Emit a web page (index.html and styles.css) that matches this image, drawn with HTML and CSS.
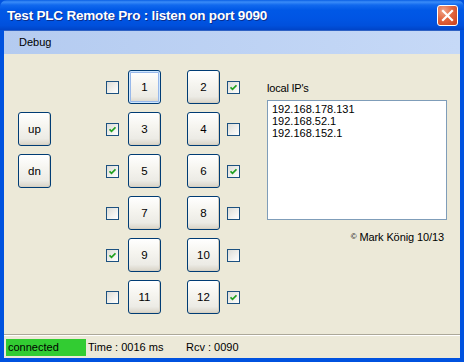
FILE: index.html
```html
<!DOCTYPE html>
<html>
<head>
<meta charset="utf-8">
<link rel="stylesheet" href="styles.css">
</head>
<body>
<div class="window">
  <div class="titlebar">
    <span class="title">Test PLC Remote Pro : listen on port 9090</span>
    <span class="close">
      <svg width="13" height="13" viewBox="0 0 13 13"><path d="M2 2 L11 11 M11 2 L2 11" stroke="#fff" stroke-width="2.2" stroke-linecap="square" fill="none"/></svg>
    </span>
  </div>
  <div class="menubar"><span class="menuitem">Debug</span></div>
  <div class="client">
    <div class="main">
      <button class="btn r1 c3 focus">1</button>
      <button class="btn r1 c5">2</button>
      <button class="btn r2 c3">3</button>
      <button class="btn r2 c5">4</button>
      <button class="btn r3 c3">5</button>
      <button class="btn r3 c5">6</button>
      <button class="btn r4 c3">7</button>
      <button class="btn r4 c5">8</button>
      <button class="btn r5 c3">9</button>
      <button class="btn r5 c5">10</button>
      <button class="btn r6 c3">11</button>
      <button class="btn r6 c5">12</button>
      <button class="btn r2 c1">up</button>
      <button class="btn r3 c1">dn</button>

      <span class="cb r1 c2"></span>
      <span class="cb r1 c6 on"><svg viewBox="0 0 7 7"><path d="M0.5 3.3 L2.5 5.3 L6.5 1.3" stroke="#21a121" stroke-width="1.8" fill="none"/></svg></span>
      <span class="cb r2 c2 on"><svg viewBox="0 0 7 7"><path d="M0.5 3.3 L2.5 5.3 L6.5 1.3" stroke="#21a121" stroke-width="1.8" fill="none"/></svg></span>
      <span class="cb r2 c6"></span>
      <span class="cb r3 c2 on"><svg viewBox="0 0 7 7"><path d="M0.5 3.3 L2.5 5.3 L6.5 1.3" stroke="#21a121" stroke-width="1.8" fill="none"/></svg></span>
      <span class="cb r3 c6 on"><svg viewBox="0 0 7 7"><path d="M0.5 3.3 L2.5 5.3 L6.5 1.3" stroke="#21a121" stroke-width="1.8" fill="none"/></svg></span>
      <span class="cb r4 c2"></span>
      <span class="cb r4 c6"></span>
      <span class="cb r5 c2 on"><svg viewBox="0 0 7 7"><path d="M0.5 3.3 L2.5 5.3 L6.5 1.3" stroke="#21a121" stroke-width="1.8" fill="none"/></svg></span>
      <span class="cb r5 c6"></span>
      <span class="cb r6 c2"></span>
      <span class="cb r6 c6 on"><svg viewBox="0 0 7 7"><path d="M0.5 3.3 L2.5 5.3 L6.5 1.3" stroke="#21a121" stroke-width="1.8" fill="none"/></svg></span>

      <div class="panel">
        <div class="label">local IP's</div>
        <div class="listbox">
          <div>192.168.178.131</div>
          <div>192.168.52.1</div>
          <div>192.168.152.1</div>
        </div>
        <div class="copy"><span class="copysym">©</span> Mark König 10/13</div>
      </div>
    </div>
    <div class="statusbar">
      <span class="status conn">connected</span>
      <span class="status time">Time : 0016 ms</span>
      <span class="status rcv">Rcv : 0090</span>
    </div>
  </div>
</div>
</body>
</html>
```
FILE: styles.css
```css
html, body {
  margin: 0;
  padding: 0;
  width: 464px;
  height: 362px;
  overflow: hidden;
  background: #ece9d8;
}
.window {
  width: 464px;
  height: 362px;
  box-sizing: border-box;
  display: flex;
  flex-direction: column;
  background: #0052df;
  font-family: "Liberation Sans", Arial, sans-serif;
  font-size: 11px;
  color: #000;
}
.titlebar {
  height: 30px;
  flex: none;
  display: flex;
  align-items: center;
  justify-content: space-between;
  padding: 0 7px 0 7px;
  background: linear-gradient(#0a5fe4 0px, #3a8cf8 2px, #1169ee 5px, #0058e6 10px, #0055e4 60%, #0050dc 85%, #0044c8 100%);
  border-radius: 7px 7px 0 0;
}
.title {
  color: #fff;
  font-weight: bold;
  font-size: 13.5px;
  letter-spacing: -0.2px;
  text-shadow: 1px 1px 0 #0a2d8c;
  margin-top: 1px;
}
.close {
  width: 19px;
  height: 19px;
  border: 1px solid #fff;
  border-radius: 3px;
  background: radial-gradient(circle at 30% 25%, #f0a488 0%, #e2663f 45%, #c83e1c 100%);
  display: flex;
  align-items: center;
  justify-content: center;
  margin-right: -1px;
  margin-top: 1px;
}
.close svg { display: block; }
.menubar {
  height: 23px;
  flex: none;
  margin: 0 4px;
  border-top: 1px solid #2f62c4;
  background: linear-gradient(to right, #b4cbf0, #c6d9f7);
  display: flex;
  align-items: center;
}
.menuitem {
  padding-left: 15px;
  margin-top: -1px;
}
.client {
  flex: 1;
  margin: 0 4px 4px 4px;
  background: #ece9d8;
  display: flex;
  flex-direction: column;
}
.main {
  flex: 1;
  display: grid;
  padding: 16px 0 0 14px;
  grid-template-columns: 33px 55px 13px 9px 33px 26px 33px 7px 13px 27px 180px;
  grid-template-rows: repeat(6, 33px);
  row-gap: 9px;
  align-content: start;
}
.r1 { grid-row: 1; }
.r2 { grid-row: 2; }
.r3 { grid-row: 3; }
.r4 { grid-row: 4; }
.r5 { grid-row: 5; }
.r6 { grid-row: 6; }
.c1 { grid-column: 1; }
.c2 { grid-column: 3; }
.c3 { grid-column: 5; }
.c5 { grid-column: 7; }
.c6 { grid-column: 9; }
.btn {
  box-sizing: border-box;
  width: 33px;
  height: 34px;
  margin: 0;
  padding: 0;
  border: 1px solid #003c74;
  border-radius: 3px;
  background: linear-gradient(#ffffff 0%, #f6f5f0 40%, #ecebe5 80%, #d8d3c7 100%);
  box-shadow: inset -1px -1px 0 #d6d0c2;
  font-family: "Liberation Sans", Arial, sans-serif;
  font-size: 11.5px;
  color: #000;
  display: flex;
  align-items: center;
  justify-content: center;
}
.btn.focus {
  box-shadow: inset 0 0 0 1px #cee7ff, inset 0 0 0 2px #98b8ea;
}
.cb {
  box-sizing: border-box;
  width: 13px;
  height: 13px;
  align-self: center;
  border: 1px solid #1c5180;
  background: linear-gradient(135deg, #dcdcd7 0%, #f2f2ef 60%, #ffffff 100%);
  display: flex;
  align-items: center;
  justify-content: center;
  margin-top: 1px;
}
.cb svg {
  width: 7px;
  height: 7px;
  display: block;
}
.panel {
  grid-column: 11;
  grid-row: 1 / 7;
  display: flex;
  flex-direction: column;
  padding-top: 12px;
}
.label {
  height: 13px;
  line-height: 13px;
  letter-spacing: -0.2px;
}
.listbox {
  box-sizing: border-box;
  height: 120px;
  margin-top: 5px;
  background: #fff;
  border: 1px solid #7f9db9;
  padding: 2px 0 0 4px;
  line-height: 12px;
}
.copy {
  margin-top: 11px;
  text-align: right;
  padding-right: 3px;
  letter-spacing: -0.1px;
}
.copysym {
  font-size: 8px;
  vertical-align: 2px;
}
.statusbar {
  height: 22px;
  flex: none;
  border-top: 1px solid #aca899;
  box-shadow: inset 0 1px 0 #fff;
  display: flex;
  align-items: center;
  padding: 1px 0 0 2px;
}
.status {
  height: 17px;
  line-height: 17px;
  box-sizing: border-box;
}
.conn {
  width: 80px;
  background: #32cc32;
  padding-left: 2px;
}
.time {
  width: 100px;
  padding-left: 2px;
}
.rcv {
  padding-left: 0;
}
```
